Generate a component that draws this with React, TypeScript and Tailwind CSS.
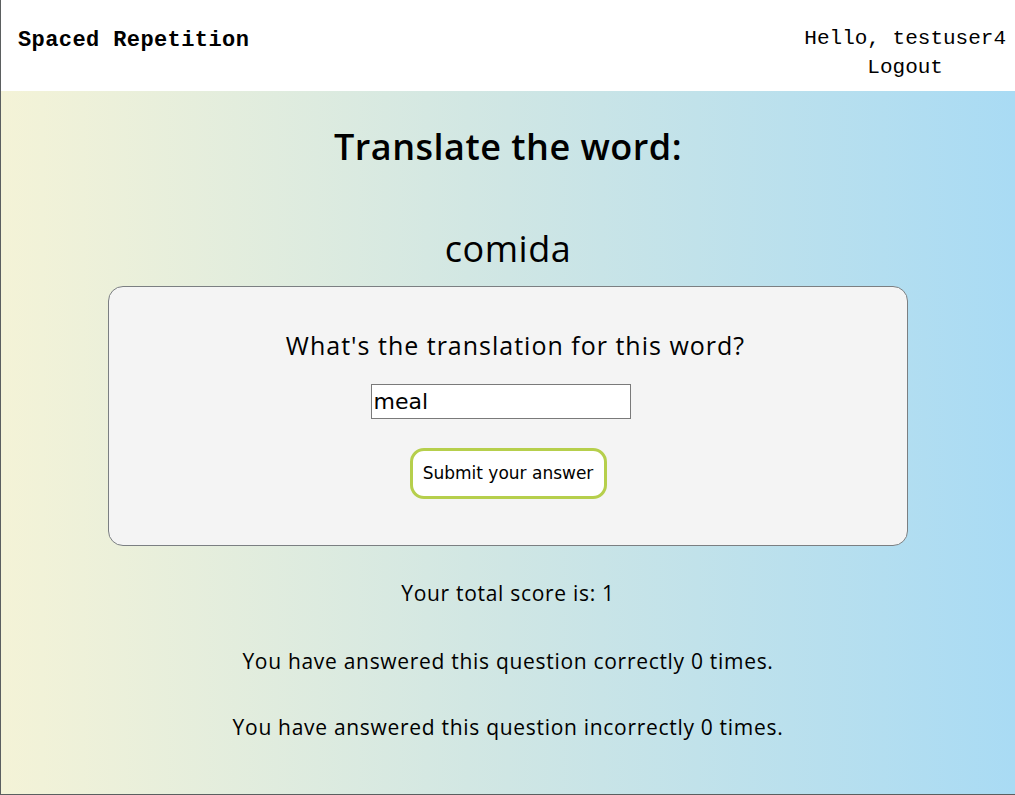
import * as React from "react"

const body = { fontFamily: "'Open Sans', Lato, sans-serif" }
const mono = { fontFamily: "'Liberation Mono', 'DejaVu Sans Mono', monospace" }
const sys = { fontFamily: "'DejaVu Sans', 'Liberation Sans', sans-serif" }

export default function App() {
    return (
        <div className="h-[795px] w-[1015px] flex flex-col border-l border-b border-[#5b5f60] overflow-hidden" style={body}>
            {/* Header */}
            <header className="h-[91px] shrink-0 bg-white flex items-start justify-between pt-[24px] pl-[17px] pr-[10px]">
                <div className="mt-[3px] font-bold text-[22px] leading-[28px] tracking-[0.4px] text-black" style={mono}>Spaced Repetition</div>
                <div className="flex flex-col items-center text-[21px] leading-[29px] text-black mr-[-1px]" style={mono}>
                    <span>Hello, testuser4</span>
                    <span>Logout</span>
                </div>
            </header>

            {/* Learning */}
            <main className="flex-1 flex flex-col items-center bg-gradient-to-r from-[#f4f3d7] via-[#cfe6e4] to-[#a9dbf4] text-black">
                <h2 className="mt-[32px] text-[36px] font-semibold leading-[48px] tracking-[0.5px]">Translate the word:</h2>
                <h3 className="mt-[54px] text-[36px] leading-[48px] tracking-[0.5px]">comida</h3>

                <form className="mt-[13px] w-[800px] h-[260px] bg-[#f4f4f4] border border-[#7b7f82] rounded-[15px] flex flex-col items-center">
                    <label className="mt-[41px] ml-[15px] text-[25px] leading-[34px] tracking-[1px]">What's the translation for this word?</label>
                    <input
                        defaultValue="meal"
                        className="mt-[22px] mr-[15px] w-[260px] h-[35px] bg-white border border-[#7a7a7a] px-[2px] text-[22px] text-black outline-none"
                        style={sys}
                    />
                    <button
                        type="button"
                        className="mt-[29px] w-[197px] h-[51px] bg-white border-[3px] border-[#b6cf4c] rounded-[14px] text-[17px] text-black"
                        style={sys}
                    >
                        Submit your answer
                    </button>
                </form>

                <p className="mt-[33px] text-[21px] leading-[28px] tracking-[0.7px]">Your total score is: 1</p>
                <p className="mt-[40px] text-[21px] leading-[28px] tracking-[0.7px]">You have answered this question correctly 0 times.</p>
                <p className="mt-[38px] text-[21px] leading-[28px] tracking-[0.7px]">You have answered this question incorrectly 0 times.</p>
            </main>
        </div>
    )
}
